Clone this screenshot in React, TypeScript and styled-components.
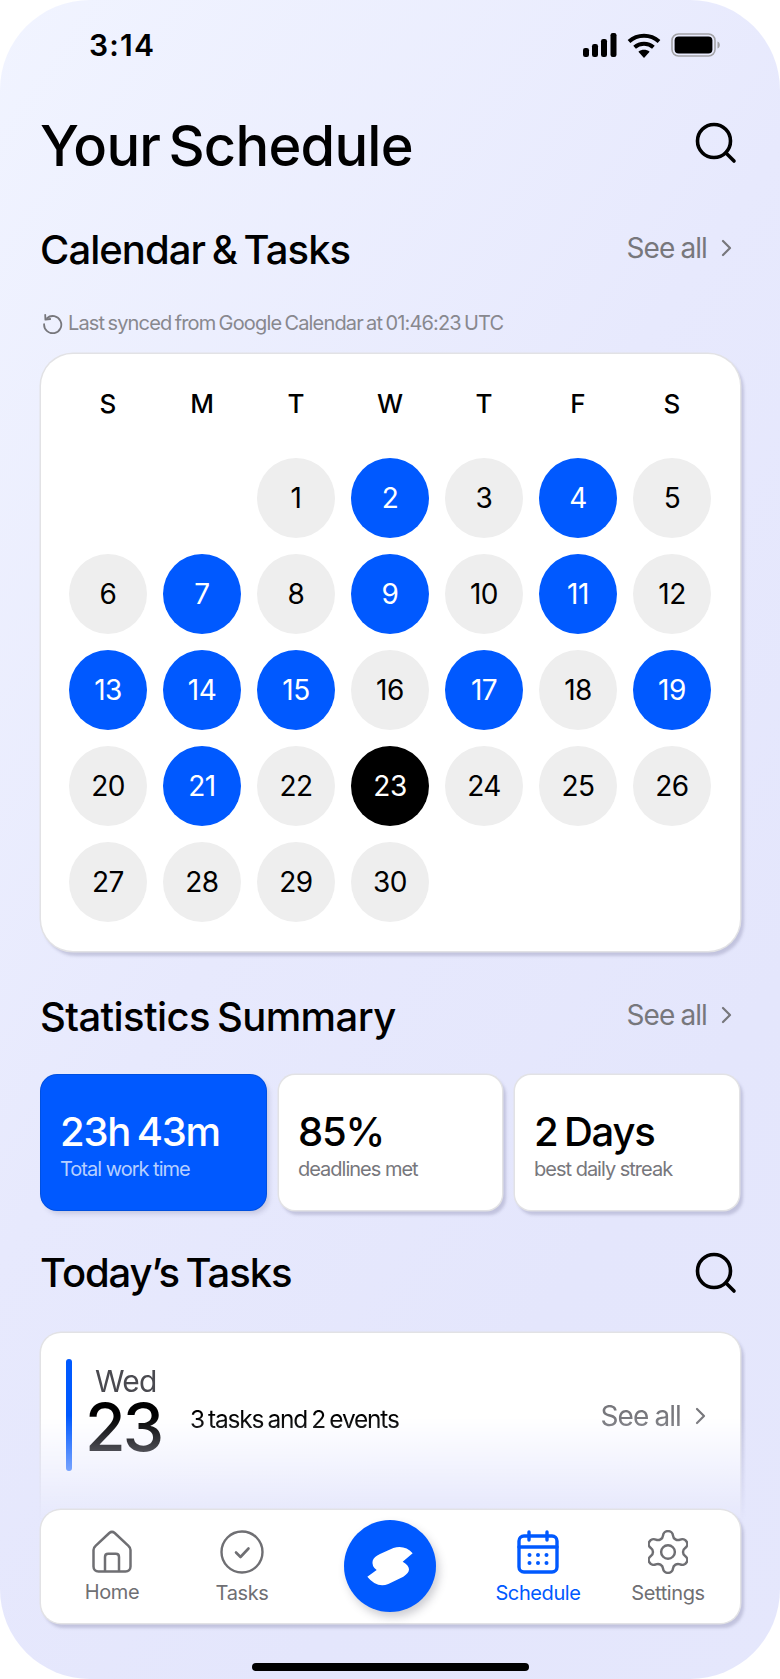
import React, { FC } from "react";
import styled, { createGlobalStyle } from "styled-components";

const GlobalStyle = createGlobalStyle`
  html, body {
    margin: 0;
    padding: 0;
    background: #fff;
  }
  * {
    box-sizing: border-box;
  }
  body {
    font-family: Inter, "Liberation Sans", sans-serif;
    color: #000;
  }
`;

const Phone = styled.div`
  position: relative;
  width: 780px;
  height: 1679px;
  overflow: hidden;
  border-radius: 90px;
  padding: 0 40px;
  background: linear-gradient(125deg, #f1f4ff 0%, #e7e9fd 45%, #e4e6fc 75%, #e5e7fc 100%);
`;

const StatusBar = styled.div`
  display: flex;
  align-items: center;
  justify-content: space-between;
  height: 24px;
  margin-top: 33px;
  padding: 0 20px 0 49px;
`;

const Time = styled.span`
  font-size: 30px;
  font-weight: 600;
  line-height: 24px;
  letter-spacing: 1.2px;
`;

const StatusIcons = styled.div`
  display: flex;
  align-items: center;
  gap: 10px;
`;

const HeaderRow = styled.div<{ $top: number; $height: number }>`
  display: flex;
  align-items: center;
  justify-content: space-between;
  height: ${(p) => p.$height}px;
  margin-top: ${(p) => p.$top}px;
`;

const Title = styled.h1`
  margin: 0;
  font-size: 56px;
  font-weight: 500;
  letter-spacing: -0.75px;
  word-spacing: -6px;
  line-height: 1;
`;

const Heading = styled.h2<{ $spacing: number }>`
  margin: 0;
  font-size: 40px;
  font-weight: 500;
  letter-spacing: ${(p) => p.$spacing}px;
  word-spacing: -3px;
  line-height: 1;
`;

const SearchWrap = styled.div<{ $raise?: number }>`
  display: flex;
  margin-right: 3px;
  margin-bottom: ${(p) => p.$raise ?? 0}px;
`;

const SeeAll = styled.div`
  display: flex;
  align-items: center;
  gap: 14px;
  margin-bottom: 5px;
  padding-right: 8px;
  font-size: 28px;
  letter-spacing: -0.9px;
  word-spacing: -1px;
  color: #77777c;
`;

const SyncRow = styled.div`
  display: flex;
  align-items: center;
  gap: 5px;
  height: 24px;
  margin-top: 41px;
  padding-left: 2px;
  font-size: 20px;
  letter-spacing: -0.85px;
  word-spacing: -1.5px;
  color: #88888e;
`;

const Card = styled.div`
  background: #fff;
  box-shadow: 0 0 0 1.5px #e2e2e5, 3px 4px 3px 1px rgba(120, 120, 160, 0.32);
`;

const CalendarCard = styled(Card)`
  width: 699px;
  margin: 19px 0 0 1px;
  padding: 32px 20px 29px;
  border-radius: 32px;
`;

const Weekdays = styled.div`
  display: grid;
  grid-template-columns: repeat(7, 94px);
  height: 36px;
  margin-bottom: 36px;
`;

const Weekday = styled.div`
  text-align: center;
  font-size: 26px;
  font-weight: 500;
  line-height: 36px;
`;

const Days = styled.div`
  display: grid;
  grid-template-columns: repeat(7, 94px);
  row-gap: 16px;
`;

const Day = styled.div<{ $kind: "plain" | "busy" | "today" }>`
  width: 78px;
  height: 80px;
  justify-self: center;
  display: flex;
  align-items: center;
  justify-content: center;
  border-radius: 50%;
  font-size: 28px;
  letter-spacing: -0.5px;
  background: ${(p) =>
    p.$kind === "busy" ? "#0059ff" : p.$kind === "today" ? "#000" : "#eeeeee"};
  color: ${(p) => (p.$kind === "plain" ? "#000" : "#fff")};
`;

const StatsRow = styled.div`
  display: grid;
  grid-template-columns: 225px 223px 224px;
  column-gap: 13px;
  margin: 38px 0 0 1px;
`;

const StatCard = styled(Card)<{ $active?: boolean }>`
  height: 135px;
  padding: 35px 0 0 19px;
  border-radius: 16px;
  background: ${(p) => (p.$active ? "#0059ff" : "#fff")};
  color: ${(p) => (p.$active ? "#fff" : "#000")};
  ${(p) =>
    p.$active &&
    "box-shadow: 0 0 0 1px #0050e0, 3px 4px 5px rgba(90, 90, 130, 0.22);"}
`;

const StatValue = styled.div`
  font-size: 40px;
  font-weight: 500;
  letter-spacing: -1.2px;
  word-spacing: -3px;
  line-height: 44px;
`;

const StatLabel = styled.div<{ $active?: boolean }>`
  margin-top: 3px;
  font-size: 20px;
  letter-spacing: -1px;
  line-height: 24px;
  color: ${(p) => (p.$active ? "#b6cfff" : "#77777c")};
`;

/* the whole task card, shadow and text included, fades out towards the nav */
const TaskFade = styled.div`
  width: 709px;
  margin: 35px 0 0 -3px;
  padding: 4px 6px 4px 4px;
  mask-image: linear-gradient(180deg, #000 45%, transparent 100%);
  -webkit-mask-image: linear-gradient(180deg, #000 45%, transparent 100%);
`;

const TaskCard = styled(Card)`
  height: 185px;
  padding: 26px 27px 0 25px;
  border-radius: 20px 20px 0 0;
  display: flex;
  align-items: flex-start;
`;

const AccentBar = styled.div`
  width: 6px;
  height: 112px;
  border-radius: 3px;
  background: #0059ff;
`;

const DateBlock = styled.div`
  width: 118px;
  padding: 6px 0 0 13px;
  text-align: left;
`;

const DayName = styled.div`
  padding-left: 10px;
  font-size: 30px;
  letter-spacing: -0.8px;
  line-height: 32px;
  color: #4a4a50;
`;

const DayNumber = styled.div`
  font-size: 66px;
  font-weight: 500;
  letter-spacing: -3px;
  line-height: 60px;
`;

const TaskSummary = styled.div`
  flex: 1;
  margin-top: 44px;
  font-size: 24.5px;
  letter-spacing: -1.2px;
  word-spacing: -1.5px;
  line-height: 32px;
`;

const TaskSeeAll = styled(SeeAll)`
  margin: 40px 0 0;
  padding-right: 7px;
  line-height: 34px;
`;

const BottomNav = styled(Card)`
  position: absolute;
  left: 41px;
  top: 1510px;
  width: 699px;
  height: 113px;
  padding: 0 6px;
  border-radius: 20px;
  display: flex;
  align-items: flex-start;
`;

const NavItem = styled.div<{ $active?: boolean }>`
  width: 130px;
  padding-top: 20px;
  display: flex;
  flex-direction: column;
  align-items: center;
  gap: 7px;
  font-size: 20px;
  letter-spacing: -0.4px;
  line-height: 24px;
  color: ${(p) => (p.$active ? "#0059ff" : "#6f6f73")};
`;

const NavCenter = styled.div`
  width: 166px;
  padding-top: 10px;
  display: flex;
  justify-content: center;
`;

const LogoButton = styled.div`
  width: 92px;
  height: 92px;
  border-radius: 50%;
  background: #0059ff;
  box-shadow: 3px 5px 8px rgba(60, 60, 80, 0.25);
`;

const HomeIndicator = styled.div`
  position: absolute;
  left: 252px;
  top: 1663px;
  width: 277px;
  height: 8px;
  border-radius: 4px;
  background: #000;
`;

const SearchIcon: FC = () => (
  <svg width="42" height="42" viewBox="0 0 42 42" fill="none" stroke="#000" strokeWidth="3.6" strokeLinecap="round">
    <circle cx="19" cy="19" r="16.5" />
    <path d="M31 31l8 8" />
  </svg>
);

const Chevron: FC = () => (
  <svg width="11" height="18" viewBox="0 0 11 18" fill="none" stroke="#77777c" strokeWidth="2.2" strokeLinecap="round" strokeLinejoin="round">
    <path d="M2 2l7 7-7 7" />
  </svg>
);

const SyncIcon: FC = () => (
  <svg width="21" height="21" viewBox="0 0 21 21" fill="none" stroke="#77777c" strokeWidth="1.8" strokeLinecap="round" strokeLinejoin="round">
    <path d="M5 5.2a8.6 8.6 0 1 1-2.9 6" />
    <path d="M3.2 1.8L3.4 6.6 8.2 6" />
  </svg>
);

const SignalIcon: FC = () => (
  <svg width="34" height="24" viewBox="0 0 34 24">
    <rect x="0" y="15" width="6" height="9" rx="2.2" />
    <rect x="9" y="11" width="6" height="13" rx="2.2" />
    <rect x="18" y="6" width="6" height="18" rx="2.2" />
    <rect x="27.5" y="0" width="6" height="24" rx="2.2" />
  </svg>
);

const WifiIcon: FC = () => (
  <svg width="34" height="25" viewBox="0 0 34 25" fill="none" stroke="#000" strokeWidth="4">
    <path d="M2 8.5C10.5 .8 23.5 .8 32 8.5" />
    <path d="M7.6 14.2c5.2-4.6 13.6-4.6 18.8 0" />
    <path d="M17 25l-5.6-6.2c3.2-2.6 8-2.6 11.2 0z" fill="#000" stroke="none" />
  </svg>
);

const BatteryIcon: FC = () => (
  <svg width="49" height="24" viewBox="0 0 49 24">
    <rect x="1" y="1" width="43" height="22" rx="6.5" fill="none" stroke="#a3a3a6" strokeWidth="1.6" />
    <rect x="3.6" y="3.6" width="37.8" height="16.8" rx="4" fill="#000" />
    <path d="M46.5 8.5c1.5.4 2.3 1.8 2.3 3.500s-.8 3.100-2.300 3.500z" fill="#a3a3a6" />
  </svg>
);

const HomeIcon: FC = () => (
  <svg width="42" height="43" viewBox="0 0 42 43" fill="none" stroke="currentColor" strokeWidth="2.500" strokeLinejoin="round">
    <path d="M2.500 20c0-1.600.6-2.800 1.800-3.800L18.300 3c1.700-1.400 3.700-1.400 5.400 0l14 13.200c1.200 1 1.800 2.200 1.800 3.800v16.500c0 3-2 5-5 5H7.500c-3 0-5-2-5-5z" />
    <path d="M14 41.500V27c0-2 1.200-3.200 3.200-3.200h7.600c2 0 3.200 1.200 3.200 3.200v14.500" />
  </svg>
);

const TasksIcon: FC = () => (
  <svg width="44" height="44" viewBox="0 0 44 44" fill="none" stroke="currentColor" strokeLinecap="round" strokeLinejoin="round">
    <circle cx="22" cy="22" r="20.500" strokeWidth="2.400" />
    <path d="M16 22.500l4.500 4.500 8-8.500" strokeWidth="2.600" />
  </svg>
);

const CalendarIcon: FC = () => (
  <svg width="42" height="44" viewBox="0 0 42 44" fill="none" stroke="currentColor" strokeWidth="3.400" strokeLinecap="round">
    <rect x="2" y="6" width="38" height="36" rx="5" />
    <path d="M2 17h38" />
    <path d="M12 2v8M30 2v8" />
    <g fill="currentColor" stroke="none">
      <circle cx="12.500" cy="25" r="2" />
      <circle cx="21" cy="25" r="2" />
      <circle cx="29.500" cy="25" r="2" />
      <circle cx="12.500" cy="33" r="2" />
      <circle cx="21" cy="33" r="2" />
      <circle cx="29.500" cy="33" r="2" />
    </g>
  </svg>
);

const GearIcon: FC = () => (
  <svg width="40" height="44" viewBox="2.700 1.500 18.600 21" preserveAspectRatio="none" fill="none" stroke="currentColor" strokeWidth="1.150" strokeLinecap="round" strokeLinejoin="round">
    <path d="M9.671 4.136a2.340 2.340 0 0 1 4.659 0 2.340 2.340 0 0 0 3.319 1.915 2.340 2.340 0 0 1 2.330 4.033 2.340 2.340 0 0 0 0 3.831 2.340 2.340 0 0 1-2.330 4.033 2.340 2.340 0 0 0-3.319 1.915 2.340 2.340 0 0 1-4.659 0 2.340 2.340 0 0 0-3.320-1.915 2.340 2.340 0 0 1-2.330-4.033 2.340 2.340 0 0 0 0-3.831A2.340 2.340 0 0 1 6.351 6.051a2.340 2.340 0 0 0 3.320-1.915" />
    <circle cx="12" cy="12" r="3.200" />
  </svg>
);

const LogoMark: FC = () => (
  <svg width="92" height="92" viewBox="-48 -30 276 276">
    <path
      fill="#fff"
      d="M158 70L128 95Q146 105 147 118Q147 130 130 140L85 162Q50 175 22 140L50 120Q34 108 38 92Q42 80 60 72L100 54Q135 44 158 70Z"
    />
  </svg>
);

const weekdays = ["S", "M", "T", "W", "T", "F", "S"];
const busyDays = [2, 4, 7, 9, 11, 13, 14, 15, 17, 19, 21];
const stats = [
  { value: "23h 43m", label: "Total work time", active: true },
  { value: "85%", label: "deadlines met", active: false },
  { value: "2 Days", label: "best daily streak", active: false },
];

const App: FC = () => {
  const dayKind = (day: number) =>
    day === 23 ? "today" : busyDays.includes(day) ? "busy" : "plain";

  return (
    <Phone>
      <GlobalStyle />
      <StatusBar>
        <Time>3:14</Time>
        <StatusIcons>
          <SignalIcon />
          <WifiIcon />
          <BatteryIcon />
        </StatusIcons>
      </StatusBar>

      <HeaderRow $top={61} $height={56}>
        <Title>Your Schedule</Title>
        <SearchWrap $raise={6}>
          <SearchIcon />
        </SearchWrap>
      </HeaderRow>

      <HeaderRow $top={56} $height={40}>
        <Heading $spacing={-0.95}>Calendar &amp; Tasks</Heading>
        <SeeAll>
          See all <Chevron />
        </SeeAll>
      </HeaderRow>

      <SyncRow>
        <SyncIcon />
        Last synced from Google Calendar at 01:46:23 UTC
      </SyncRow>

      <CalendarCard>
        <Weekdays>
          {weekdays.map((d, i) => (
            <Weekday key={i}>{d}</Weekday>
          ))}
        </Weekdays>
        <Days>
          <div />
          <div />
          {Array.from({ length: 30 }, (_, i) => i + 1).map((day) => (
            <Day key={day} $kind={dayKind(day)}>
              {day}
            </Day>
          ))}
        </Days>
      </CalendarCard>

      <HeaderRow $top={46} $height={40}>
        <Heading $spacing={-0.6}>Statistics Summary</Heading>
        <SeeAll>
          See all <Chevron />
        </SeeAll>
      </HeaderRow>

      <StatsRow>
        {stats.map((s) => (
          <StatCard key={s.label} $active={s.active}>
            <StatValue>{s.value}</StatValue>
            <StatLabel $active={s.active}>{s.label}</StatLabel>
          </StatCard>
        ))}
      </StatsRow>

      <HeaderRow $top={42} $height={42}>
        <Heading $spacing={-1.1}>Today’s Tasks</Heading>
        <SearchWrap>
          <SearchIcon />
        </SearchWrap>
      </HeaderRow>

      <TaskFade>
        <TaskCard>
          <AccentBar />
          <DateBlock>
            <DayName>Wed</DayName>
            <DayNumber>23</DayNumber>
          </DateBlock>
          <TaskSummary>3 tasks and 2 events</TaskSummary>
          <TaskSeeAll>
            See all <Chevron />
          </TaskSeeAll>
        </TaskCard>
      </TaskFade>

      <BottomNav>
        <NavItem>
          <HomeIcon />
          Home
        </NavItem>
        <NavItem>
          <TasksIcon />
          Tasks
        </NavItem>
        <NavCenter>
          <LogoButton>
            <LogoMark />
          </LogoButton>
        </NavCenter>
        <NavItem $active>
          <CalendarIcon />
          Schedule
        </NavItem>
        <NavItem>
          <GearIcon />
          Settings
        </NavItem>
      </BottomNav>

      <HomeIndicator />
    </Phone>
  );
};

export default App;
